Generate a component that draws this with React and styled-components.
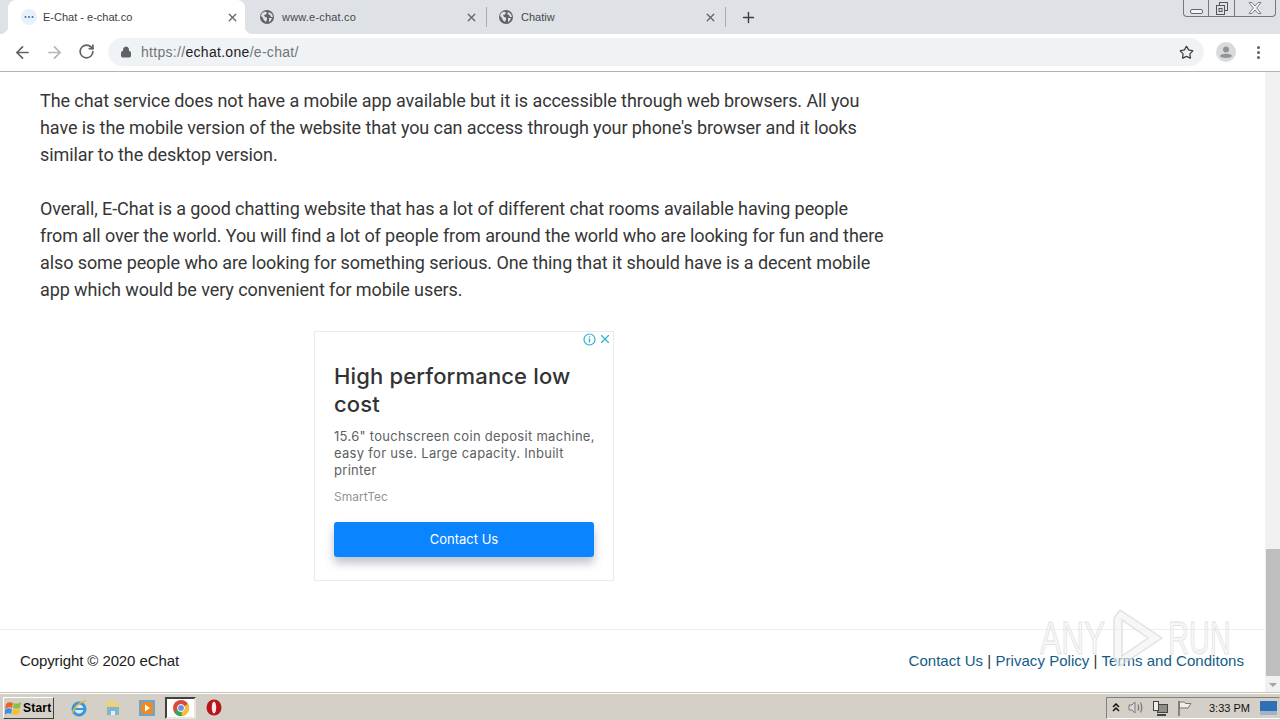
import React from "react";
import styled, { createGlobalStyle } from "styled-components";
import { ArrowLeft, ArrowRight, RotateCw, Lock, Star, X, Plus } from "lucide-react";

const GlobalStyle = createGlobalStyle`
  html, body {
    margin: 0;
    padding: 0;
    overflow: hidden;
    background: #fff;
  }
  * {
    box-sizing: border-box;
  }
`;

const Screen = styled.div`
  position: relative;
  width: 1280px;
  height: 720px;
  display: flex;
  flex-direction: column;
  overflow: hidden;
  font-family: "Roboto", sans-serif;
`;

const TabStrip = styled.div`
  height: 34px;
  flex: none;
  display: flex;
  background: #dee1e6;
  padding-left: 8px;
  position: relative;
`;

const Tab = styled.div`
  width: ${(p) => p.$width}px;
  display: flex;
  align-items: center;
  padding: 0 ${(p) => (p.$active ? 6 : 8)}px 0 ${(p) => p.$left}px;
  background: ${(p) => (p.$active ? "#fff" : "transparent")};
  border-radius: 8px 8px 0 0;
  font-family: "Liberation Sans", sans-serif;
  font-size: 11px;
  color: ${(p) => (p.$active ? "#3c4043" : "#45494d")};
  position: relative;
  ${(p) =>
    p.$active &&
    `
    &::before, &::after {
      content: "";
      position: absolute;
      bottom: 0;
      width: 8px;
      height: 8px;
    }
    &::before {
      left: -8px;
      background: radial-gradient(circle at 0 0, #dee1e6 8px, #fff 8.5px);
    }
    &::after {
      right: -8px;
      background: radial-gradient(circle at 100% 0, #dee1e6 8px, #fff 8.5px);
    }
  `}
`;

const TabTitle = styled.span`
  flex: 1;
  margin-left: ${(p) => p.$gap}px;
  white-space: nowrap;
  letter-spacing: ${(p) => p.$spacing || 0}px;
`;

const TabDivider = styled.div`
  width: 1px;
  height: 20px;
  margin-top: 7px;
  flex: none;
  background: #a9acb1;
`;

const NewTab = styled.div`
  width: 44px;
  display: flex;
  align-items: center;
  justify-content: center;
  color: #3c4043;
`;

const WindowButtons = styled.div`
  position: absolute;
  top: 0;
  right: 4px;
  width: 93px;
  height: 17px;
  display: flex;
  border: 1px solid #74787e;
  border-top: none;
  border-radius: 0 0 4px 4px;
`;

const WindowButton = styled.div`
  width: ${(p) => p.$width}px;
  display: flex;
  align-items: center;
  justify-content: center;
  border-right: ${(p) => (p.$last ? "none" : "1px solid #74787e")};
`;

const Toolbar = styled.div`
  height: 38px;
  flex: none;
  display: flex;
  align-items: center;
  background: #fff;
  border-bottom: 1px solid #b3b3b3;
  padding-bottom: 1px;
`;

const NavButton = styled.div`
  width: 32px;
  display: flex;
  justify-content: center;
  color: ${(p) => p.$color};
`;

const NavGroup = styled.div`
  display: flex;
  padding-left: 6px;
  width: 108px;
`;

const Omnibox = styled.div`
  width: 1096px;
  height: 28px;
  display: flex;
  align-items: center;
  padding: 0 10px 0 12px;
  border-radius: 14px;
  background: #f0f3f6;
  font-family: "Liberation Sans", sans-serif;
  font-size: 14px;
  color: #70757a;
`;

const Url = styled.div`
  flex: 1;
  margin-left: 9px;
  letter-spacing: 0.3px;
  b {
    font-weight: normal;
    color: #202124;
  }
`;

const ToolbarRight = styled.div`
  flex: 1;
  display: flex;
  align-items: center;
  padding-left: 12px;
  gap: 15px;
`;

const Avatar = styled.div`
  width: 20px;
  height: 20px;
`;

const Dots = styled.div`
  display: flex;
  flex-direction: column;
  gap: 2px;
  margin-left: 6px;
  span {
    width: 3px;
    height: 3px;
    border-radius: 50%;
    background: #5f6368;
  }
`;

const Viewport = styled.div`
  flex: 1;
  display: flex;
  min-height: 0;
  background: #fff;
`;

const Page = styled.div`
  flex: 1;
  display: flex;
  flex-direction: column;
  min-width: 0;
`;

const Article = styled.div`
  width: 885px;
  padding: 15px 0 0 40px;
  height: 557px;
`;

const Paragraph = styled.p`
  margin: 0 0 27px;
  font-size: 18px;
  line-height: 27px;
  letter-spacing: -0.09px;
  color: #363636;
  font-weight: 400;
`;

const AdSlot = styled.div`
  margin: 28px 0 0 274px;
  width: 300px;
  height: 250px;
  border: 1px solid #eaeaea;
  padding: 30px 19px 0;
  position: relative;
`;

const AdBadges = styled.div`
  position: absolute;
  top: 0;
  right: 1px;
  display: flex;
  align-items: center;
  gap: 2px;
  color: #2fb3cf;
`;

const AdTitle = styled.div`
  font-family: "Inter", sans-serif;
  font-size: 22px;
  line-height: 28px;
  font-weight: 500;
  color: #333;
  letter-spacing: 0.15px;
`;

const AdBody = styled.div`
  margin-top: 10px;
  width: 270px;
  font-family: "Inter", sans-serif;
  font-size: 13px;
  line-height: 17px;
  color: #5c5f63;
  letter-spacing: 0.3px;
  white-space: nowrap;
`;

const AdBrand = styled.div`
  margin-top: 10px;
  font-family: "Inter", sans-serif;
  font-size: 12px;
  line-height: 15px;
  color: #949494;
`;

const AdButton = styled.div`
  margin-top: 18px;
  width: 260px;
  height: 35px;
  padding-bottom: 2px;
  display: flex;
  align-items: center;
  justify-content: center;
  border-radius: 3px;
  background: #0a84ff;
  box-shadow: 0 6px 10px rgba(40, 50, 90, 0.3);
  font-family: "Inter", sans-serif;
  font-size: 13px;
  color: #fff;
`;

const Footer = styled.div`
  flex: 1;
  border-top: 1px solid #eee;
  display: flex;
  justify-content: space-between;
  padding: 21px 21px 0 20px;
  font-family: "Liberation Sans", sans-serif;
  font-size: 15px;
  line-height: 20px;
  color: #222;
`;

const Copyright = styled.span`
  letter-spacing: -0.1px;
`;

const FooterLinks = styled.div`
  color: #333;
  letter-spacing: 0.04px;
  a {
    color: #135c86;
    text-decoration: none;
  }
`;

const Scrollbar = styled.div`
  width: 15px;
  flex: none;
  display: flex;
  flex-direction: column;
  background: #f1f1f1;
`;

const ScrollThumb = styled.div`
  margin: 477px 0 0 1px;
  height: 127px;
  background: #bebebe;
`;

const ScrollArrow = styled.div`
  height: 15px;
  display: flex;
  align-items: center;
  justify-content: center;
  margin-top: auto;
  &::after {
    content: "";
    border-left: 4px solid transparent;
    border-right: 4px solid transparent;
    border-top: 4px solid #a3a3a3;
  }
`;

const Taskbar = styled.div`
  height: 28px;
  flex: none;
  display: flex;
  align-items: center;
  background: #d4d0c8;
  border-top: 1px solid #c8c4bc;
  box-shadow: inset 0 1px 0 #fff;
  padding: 2px 0 0 3px;
`;

const StartButton = styled.div`
  width: 51px;
  height: 22px;
  display: flex;
  align-items: center;
  gap: 1px;
  padding-left: 1px;
  background: #d4d0c8;
  border: 1px solid;
  border-color: #fff #404040 #404040 #fff;
  font-family: "Liberation Sans", sans-serif;
  font-weight: bold;
  font-size: 12px;
  letter-spacing: 0.2px;
  color: #000;
`;

const QuickLaunch = styled.div`
  display: flex;
  align-items: center;
  margin-left: 8px;
`;

const TaskIcon = styled.div`
  width: ${(p) => p.$width || 34}px;
  height: 22px;
  display: flex;
  align-items: center;
  justify-content: center;
  ${(p) =>
    p.$pressed &&
    `margin: 0 1px; background: #fff; border: 2px solid; border-color: #404040 #e8e6e0 #e8e6e0 #404040;`}
`;

const Tray = styled.div`
  margin-left: auto;
  width: 174px;
  height: 22px;
  display: flex;
  align-items: center;
  border: 1px solid;
  border-color: #808080 #d4d0c8 #fff #808080;
  font-family: "Liberation Sans", sans-serif;
  font-size: 11px;
  color: #111;
`;

const TrayIcon = styled.div`
  width: ${(p) => p.$width || 24}px;
  display: flex;
  justify-content: center;
`;

const Clock = styled.span`
  margin-left: 13px;
  width: 51px;
  white-space: nowrap;
`;

const Watermark = styled.div`
  position: absolute;
  left: 1040px;
  top: 608px;
  display: flex;
  align-items: flex-start;
  pointer-events: none;
`;

const WatermarkWord = styled.span`
  display: block;
  width: 64px;
  font-family: "Liberation Sans", sans-serif;
  font-size: 46px;
  line-height: 60px;
  color: rgba(240, 240, 240, 0.55);
  -webkit-text-stroke: 1px rgba(215, 215, 215, 0.7);
  transform: scaleX(${(p) => p.$scale});
  transform-origin: left center;
  white-space: nowrap;
`;

const WatermarkPlay = styled.svg`
  margin: 0 4px 0 6px;
  flex: none;
`;

const Globe = () => (
  <svg width="14" height="14" viewBox="0 0 14 14">
    <circle cx="7" cy="7" r="7" fill="#5f6368" />
    <path d="M2 3l3-1.5 2 1-1 2-2 .5 1 2 2 .5v2l-1 2.5C4 11 3 9 3 8L1 6zM9 2l3 2 1 3-2 0-1-2-2-1zM9 8h3l-1.500 3L9 12z" fill="#dee1e6" />
  </svg>
);

const TabClose = () => <X size={13} strokeWidth={2.4} color="#5f6368" />;

const App = () => (
  <Screen>
    <GlobalStyle />
    <TabStrip>
      <Tab $active $width={237} $left={13}>
        <svg width="16" height="16" viewBox="0 0 16 16">
          <circle cx="8" cy="8" r="8" fill="#e8f0fb" />
          <circle cx="4.500" cy="8" r="1" fill="#3b6fb5" />
          <circle cx="8" cy="8" r="1" fill="#3b6fb5" />
          <circle cx="11.500" cy="8" r="1" fill="#3b6fb5" />
        </svg>
        <TabTitle $gap={6}>E-Chat - e-chat.co</TabTitle>
        <TabClose />
      </Tab>
      <Tab $width={241} $left={15}>
        <Globe />
        <TabTitle $gap={8} $spacing={0.2}>www.e-chat.co</TabTitle>
        <TabClose />
      </Tab>
      <TabDivider />
      <Tab $width={238} $left={12}>
        <Globe />
        <TabTitle $gap={8}>Chatiw</TabTitle>
        <TabClose />
      </Tab>
      <TabDivider />
      <NewTab>
        <Plus size={17} strokeWidth={2} />
      </NewTab>
      <WindowButtons>
        <WindowButton $width={25}>
          <svg width="13" height="16" viewBox="0 0 13 16">
            <rect x="0.500" y="9.500" width="12" height="4" rx="1.500" fill="#f4f4f4" stroke="#666" />
          </svg>
        </WindowButton>
        <WindowButton $width={26}>
          <svg width="12" height="13" viewBox="0 0 12 13">
            <rect x="3.500" y="0.500" width="8" height="8" fill="none" stroke="#555" />
            <rect x="0.500" y="3.500" width="8" height="9" fill="#dee1e6" stroke="#555" />
            <rect x="3" y="6.500" width="3" height="3" fill="none" stroke="#555" />
          </svg>
        </WindowButton>
        <WindowButton $width={40} $last>
          <svg width="14" height="12" viewBox="0 0 14 12">
            <path d="M1 .5h3L7 4l3-3.500h3L8.700 6 13 11.500h-3L7 8l-3 3.500H1L5.300 6z" fill="#eef0f2" stroke="#777" strokeWidth="0.900" />
          </svg>
        </WindowButton>
      </WindowButtons>
    </TabStrip>
    <Toolbar>
      <NavGroup>
        <NavButton $color="#5f6368"><ArrowLeft size={19} strokeWidth={2.200} /></NavButton>
        <NavButton $color="#b4b7ba"><ArrowRight size={19} strokeWidth={2.200} /></NavButton>
        <NavButton $color="#5f6368"><RotateCw size={17} strokeWidth={2.400} /></NavButton>
      </NavGroup>
      <Omnibox>
        <Lock size={12} fill="#5f6368" color="#5f6368" />
        <Url>https://<b>echat.one</b>/e-chat/</Url>
        <Star size={15} strokeWidth={2} color="#3c4043" />
      </Omnibox>
      <ToolbarRight>
        <Avatar>
          <svg width="20" height="20" viewBox="0 0 20 20">
            <circle cx="10" cy="10" r="10" fill="#d9dadc" />
            <circle cx="10" cy="7.500" r="3" fill="#909498" />
            <path d="M4 14c1-3 11-3 12 0-1 2.500-11 2.500-12 0z" fill="#909498" />
          </svg>
        </Avatar>
        <Dots><span /><span /><span /></Dots>
      </ToolbarRight>
    </Toolbar>
    <Viewport>
      <Page>
        <Article>
          <Paragraph>
            The chat service does not have a mobile app available but it is accessible through web browsers. All you have is the mobile version of the website that you can access through your phone's browser and it looks similar to the desktop version.
          </Paragraph>
          <Paragraph>
            Overall, E-Chat is a good chatting website that has a lot of different chat rooms available having people from all over the world. You will find a lot of people from around the world who are looking for fun and there also some people who are looking for something serious. One thing that it should have is a decent mobile app which would be very convenient for mobile users.
          </Paragraph>
          <AdSlot>
            <AdBadges>
              <svg width="13" height="13" viewBox="0 0 13 13">
                <circle cx="6.500" cy="6.500" r="5.500" fill="none" stroke="#2fb3cf" strokeWidth="1.200" />
                <path d="M6.500 5.500v4M6.500 3.200v1.200" stroke="#2fb3cf" strokeWidth="1.400" />
              </svg>
              <X size={14} strokeWidth={2} />
            </AdBadges>
            <AdTitle>High performance low cost</AdTitle>
            <AdBody>
              15.6" touchscreen coin deposit machine,<br />
              easy for use. Large capacity. Inbuilt<br />
              printer
            </AdBody>
            <AdBrand>SmartTec</AdBrand>
            <AdButton>Contact Us</AdButton>
          </AdSlot>
        </Article>
        <Footer>
          <Copyright>Copyright © 2020 eChat</Copyright>
          <FooterLinks>
            <a>Contact Us</a> | <a>Privacy Policy</a> | <a>Terms and Conditons</a>
          </FooterLinks>
        </Footer>
      </Page>
      <Scrollbar>
        <ScrollThumb />
        <ScrollArrow />
      </Scrollbar>
    </Viewport>
    <Taskbar>
      <StartButton>
        <svg width="17" height="16" viewBox="0 0 17 16">
          <path d="M1 4c2-2 4-2 7-1L7 8C5 7 3 7 0 9z" fill="#e8642c" />
          <path d="M9 3c2 1 4 1 7-1l-1 6c-3 1-5 1-7 0z" fill="#8cbf3f" />
          <path d="M0 10c2-2 4-2 7-1l-1 5c-2-1-4-1-7 1z" fill="#3f8fdc" />
          <path d="M8 9c2 1 4 1 7 0l-1 5c-3 1-5 1-7 0z" fill="#f6c026" />
        </svg>
        Start
      </StartButton>
      <QuickLaunch>
        <TaskIcon>
          <svg width="18" height="18" viewBox="0 0 18 18">
            <circle cx="9" cy="10" r="6" fill="#d9ecf8" stroke="#3d94d6" strokeWidth="3" />
            <path d="M4 10h10" stroke="#3d94d6" strokeWidth="2" />
            <path d="M2 15C4 8 11 2 16 2" fill="none" stroke="#e0b84a" strokeWidth="1.500" />
          </svg>
        </TaskIcon>
        <TaskIcon>
          <svg width="18" height="18" viewBox="0 0 18 18">
            <path d="M2 2h9l5 4v10H2z" fill="#e9d27f" />
            <path d="M3 8h12v8H3z" fill="#7fb6d8" />
            <path d="M7 12h4v4H7z" fill="#e9eef2" />
          </svg>
        </TaskIcon>
        <TaskIcon>
          <svg width="18" height="18" viewBox="0 0 18 18">
            <rect x="1" y="1" width="16" height="16" fill="#6da4d6" />
            <rect x="3" y="3" width="12" height="12" rx="2" fill="#f08a1d" />
            <path d="M7 5.500l5 3.500-5 3.500z" fill="#fff" />
          </svg>
        </TaskIcon>
        <TaskIcon $pressed $width={31}>
          <svg width="16" height="16" viewBox="0 0 16 16">
            <circle cx="8" cy="8" r="8" fill="#dc4a3c" />
            <path d="M8 8L1 12a8 8 0 0 0 8 4z" fill="#3aa757" />
            <path d="M8 8l7-4a8 8 0 0 1-6 12z" fill="#f2c230" />
            <circle cx="8" cy="8" r="3.500" fill="#6f8fe0" stroke="#fff" />
          </svg>
        </TaskIcon>
        <TaskIcon>
          <svg width="16" height="17" viewBox="0 0 16 17">
            <ellipse cx="8" cy="8.500" rx="7.500" ry="8" fill="#b8141a" />
            <ellipse cx="8" cy="8.500" rx="2.200" ry="6" fill="#f6e6e6" />
          </svg>
        </TaskIcon>
      </QuickLaunch>
      <Tray>
        <TrayIcon $width={17}>
          <svg width="8" height="9" viewBox="0 0 8 9">
            <path d="M1 4l3-3 3 3M1 8l3-3 3 3" fill="none" stroke="#111" strokeWidth="1.500" />
          </svg>
        </TrayIcon>
        <TrayIcon>
          <svg width="17" height="15" viewBox="0 0 17 15">
            <path d="M1 5h3l3-3v11L4 10H1z" fill="#d8d8d8" stroke="#7a7a7a" />
            <path d="M10 4.500c1 2 1 4 0 6M12.500 2.500c1.500 3 1.500 7 0 10" fill="none" stroke="#7a7a7a" strokeWidth="1.200" />
          </svg>
        </TrayIcon>
        <TrayIcon>
          <svg width="17" height="16" viewBox="0 0 17 16">
            <rect x="5.500" y="4.500" width="10" height="8" fill="#8f8f86" stroke="#444" />
            <rect x="1.500" y="1.500" width="5" height="9" fill="#eee" stroke="#444" />
            <path d="M5 15h9" stroke="#444" strokeWidth="2" />
          </svg>
        </TrayIcon>
        <TrayIcon>
          <svg width="15" height="16" viewBox="0 0 15 16">
            <path d="M2 1v15" stroke="#666" strokeWidth="1.400" />
            <path d="M2.500 2h5l1 1.500H14L11 8H2.500z" fill="#eeeeea" stroke="#777" />
          </svg>
        </TrayIcon>
        <Clock>3:33 PM</Clock>
        <svg width="17" height="14" viewBox="0 0 17 14">
          <rect width="17" height="14" fill="#2f6fb8" />
          <rect y="10" width="17" height="4" fill="#9fb4c8" />
        </svg>
      </Tray>
    </Taskbar>
    <Watermark>
      <WatermarkWord $scale={0.69}>ANY</WatermarkWord>
      <WatermarkPlay width="54" height="60" viewBox="0 0 54 60">
        <path d="M10 2L52 30 10 58 4 52V10zM12 12V48L38 30z" fill="rgba(240,240,240,0.55)" stroke="rgba(215,215,215,0.7)" strokeWidth="1.500" />
      </WatermarkPlay>
      <WatermarkWord $scale={0.63}>RUN</WatermarkWord>
    </Watermark>
  </Screen>
);

export default App;
